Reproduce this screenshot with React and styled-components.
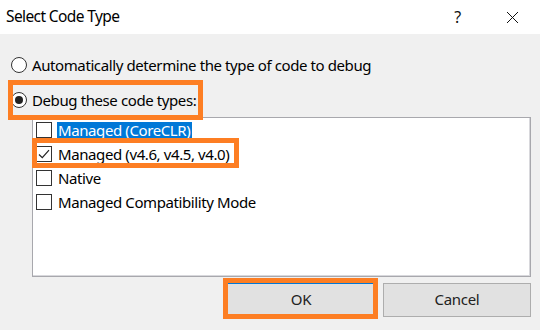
import React from "react";
import styled, { createGlobalStyle, css } from "styled-components";

const GlobalStyle = createGlobalStyle`
  html, body {
    margin: 0;
    padding: 0;
    background: #f0f0f0;
  }
  body {
    font-family: "Noto Sans", "Open Sans", sans-serif;
    color: #000;
  }
`;

const orange = "#fd7e23";

const marked = css`
  position: relative;
  &::after {
    content: "";
    position: absolute;
    border: 5px solid ${orange};
    pointer-events: none;
  }
`;

const Dialog = styled.div`
  width: 540px;
  height: 330px;
  display: flex;
  flex-direction: column;
  background: #f0f0f0;
  overflow: hidden;
`;

const TitleBar = styled.header`
  height: 34px;
  flex: none;
  display: flex;
  align-items: center;
  background: #fff;
  padding-left: 6px;
  font-size: 15.5px;
  letter-spacing: -0.6px;
`;

const Title = styled.span`
  flex: 1;
  padding-bottom: 2px;
`;

const TitleButton = styled.span`
  width: 55px;
  display: flex;
  justify-content: center;
  align-items: center;
  font-size: 16px;
  color: #111;
`;

const Body = styled.main`
  flex: 1;
  display: flex;
  flex-direction: column;
  padding: 19px 9px 0 11px;
`;

const RadioRow = styled.label`
  height: 24px;
  display: flex;
  align-items: center;
  gap: 5px;
  font-size: 15px;
  letter-spacing: -0.4px;
  align-self: flex-start;
  & + & {
    margin-top: 11px;
  }
  ${(p) =>
    p.$marked &&
    css`
      ${marked}
      &::after {
        left: -3px;
        right: -7px;
        top: -8px;
        bottom: -8px;
      }
    `}
`;

const RadioCircle = styled.span`
  width: 14px;
  height: 14px;
  border: 1px solid #333;
  border-radius: 50%;
  background: #fff;
  display: flex;
  align-items: center;
  justify-content: center;
  &::before {
    content: "";
    width: 8px;
    height: 8px;
    border-radius: 50%;
    background: #222;
    display: ${(p) => (p.$on ? "block" : "none")};
  }
`;

const ListBox = styled.div`
  margin: 5px 0 0 21px;
  height: 160px;
  box-sizing: border-box;
  background: #fff;
  border: 1px solid #a8a8ad;
  box-shadow: inset -1px -1px 0 #d8d8dc;
  display: flex;
  flex-direction: column;
`;

const Item = styled.div`
  height: 24px;
  flex: none;
  display: flex;
  align-items: center;
  padding-left: 3px;
  gap: 5px;
  font-size: 15px;
  letter-spacing: -0.4px;
  align-self: flex-start;
  ${(p) =>
    p.$marked &&
    css`
      ${marked}
      margin-left: -1px;
      padding-left: 4px;
      padding-right: 8px;
      &::after {
        left: 0;
        right: 0;
        top: -4px;
        bottom: -2px;
      }
    `}
`;

const Box = styled.span`
  width: 16px;
  height: 16px;
  box-sizing: border-box;
  border: 1px solid #333;
  background: #fff;
  display: flex;
  align-items: center;
  justify-content: center;
`;

const ItemText = styled.span`
  padding: 0 2px 0 1px;
  line-height: 17px;
  background: ${(p) => (p.$selected ? "#0078d7" : "transparent")};
  color: ${(p) => (p.$selected ? "#fff" : "#000")};
`;

const Buttons = styled.div`
  display: flex;
  justify-content: flex-end;
  gap: 8px;
  margin-top: 6px;
`;

const Button = styled.button`
  width: 148px;
  height: 34px;
  box-sizing: border-box;
  background: #e1e1e1;
  border: 1px solid ${(p) => (p.$focused ? "#0078d7" : "#adadad")};
  font-family: inherit;
  font-size: 15px;
  letter-spacing: -0.3px;
  color: #222;
  padding: 0 0 2px;
  ${(p) =>
    p.$marked &&
    css`
      ${marked}
      &::after {
        left: -5px;
        right: -4px;
        top: -6px;
        bottom: -3px;
      }
    `}
`;

const Check = () => (
  <svg width="14" height="14" viewBox="0 0 14 14">
    <path d="M2 7.5 L5.3 10.6 L12 3.2" fill="none" stroke="#222" strokeWidth="1.2" />
  </svg>
);

const Close = () => (
  <svg width="13" height="13" viewBox="0 0 13 13">
    <path d="M1 1 L12 12 M12 1 L1 12" stroke="#111" strokeWidth="1" />
  </svg>
);

const items = [
  { label: "Managed (CoreCLR)", selected: true },
  { label: "Managed (v4.6, v4.5, v4.0)", checked: true, marked: true },
  { label: "Native" },
  { label: "Managed Compatibility Mode" },
];

export default function App() {
  return (
    <>
      <GlobalStyle />
      <Dialog>
        <TitleBar>
          <Title>Select Code Type</Title>
          <TitleButton>?</TitleButton>
          <TitleButton>
            <Close />
          </TitleButton>
        </TitleBar>
        <Body>
          <RadioRow>
            <RadioCircle />
            Automatically determine the type of code to debug
          </RadioRow>
          <RadioRow $marked>
            <RadioCircle $on />
            Debug these code types:
          </RadioRow>
          <ListBox>
            {items.map((it) => (
              <Item key={it.label} $marked={it.marked}>
                <Box>{it.checked && <Check />}</Box>
                <ItemText $selected={it.selected}>{it.label}</ItemText>
              </Item>
            ))}
          </ListBox>
          <Buttons>
            <Button $focused $marked>
              OK
            </Button>
            <Button>Cancel</Button>
          </Buttons>
        </Body>
      </Dialog>
    </>
  );
}
